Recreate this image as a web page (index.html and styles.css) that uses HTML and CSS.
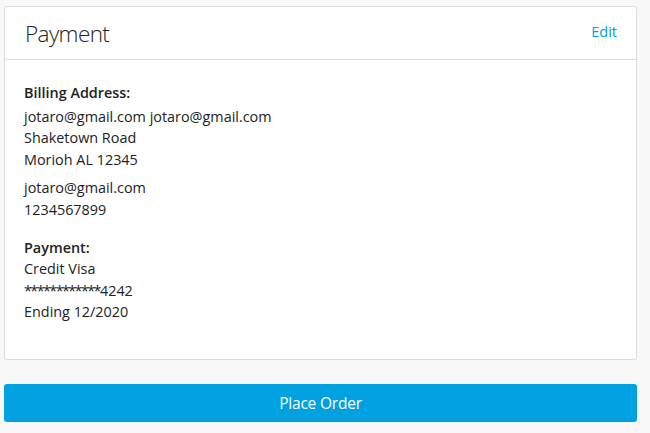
FILE: index.html
```html
<!DOCTYPE html>
<html>
<head>
<meta charset="utf-8">
<link rel="stylesheet" href="styles.css">
</head>
<body>
<div class="page">
  <section class="card">
    <header class="card-header">
      <h2 class="card-title">Payment</h2>
      <a class="edit-link" href="#">Edit</a>
    </header>
    <div class="card-body">
      <div class="block">
        <div class="label label-billing">Billing Address:</div>
        <div>jotaro@gmail.com jotaro@gmail.com</div>
        <div>Shaketown Road</div>
        <div>Morioh AL 12345</div>
      </div>
      <div class="block block-contact">
        <div>jotaro@gmail.com</div>
        <div>1234567899</div>
      </div>
      <div class="block block-pay">
        <div class="label">Payment:</div>
        <div>Credit Visa</div>
        <div><span class="mask">************</span>4242</div>
        <div>Ending 12/2020</div>
      </div>
    </div>
  </section>
  <button class="place-order">Place Order</button>
</div>
</body>
</html>
```

FILE: styles.css
```css
html, body {
  margin: 0;
  padding: 0;
  background: #f8f8f8;
}
body {
  font-family: "Open Sans", "Noto Sans", sans-serif;
  font-size: 14.4px;
  color: #222;
}
.page {
  padding: 6px 13px 0 4px;
}
.card {
  background: #fff;
  border: 1px solid #dcdcdc;
  border-radius: 3px;
}
.card-header {
  display: flex;
  align-items: center;
  justify-content: space-between;
  height: 52px;
  padding: 0 19px 0 19px;
  border-bottom: 1px solid #dcdcdc;
}
.card-title {
  margin: 0 0 0 1px;
  font-weight: 300;
  font-size: 22.5px;
  letter-spacing: -0.6px;
  color: #222;
}
.edit-link {
  color: #00a0e0;
  text-decoration: none;
  font-size: 14.5px;
  margin-top: -4px;
}
.card-body {
  padding: 22px 19px 36px 19px;
  line-height: 21.6px;
}
.label {
  font-weight: 600;
}
.label-billing {
  margin-bottom: 2px;
}
.mask {
  letter-spacing: -1.6px;
}
.block-contact {
  margin-top: 7px;
}
.block-pay {
  margin-top: 16px;
}
.place-order {
  display: block;
  width: 100%;
  margin-top: 24px;
  height: 38px;
  border: none;
  border-radius: 3px;
  background: #00a1e0;
  color: #fff;
  font-family: "Open Sans", "Noto Sans", sans-serif;
  font-size: 15.5px;
  letter-spacing: -0.2px;
}
```
